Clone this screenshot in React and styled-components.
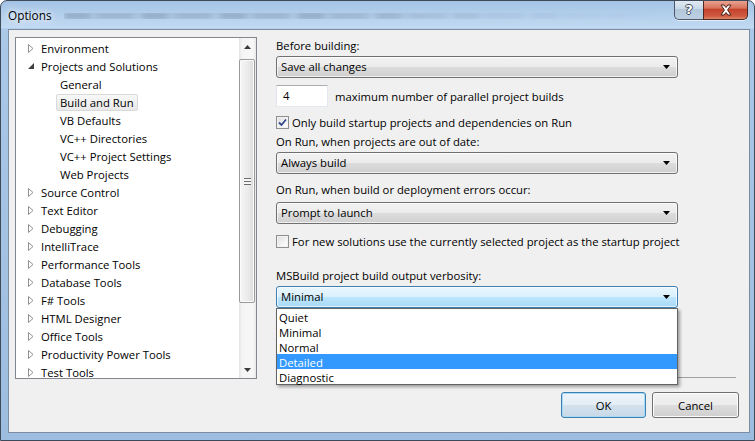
import React from 'react'
import styled, { createGlobalStyle } from 'styled-components'

const GlobalStyle = createGlobalStyle`
  html, body { margin: 0; padding: 0; background: #fff; }
  body {
    font-family: "Open Sans", "Segoe UI", sans-serif;
    font-size: 11.3px;
    color: #000;
  }
  * { box-sizing: border-box; }
`

const Window = styled.div`
  width: 755px;
  height: 441px;
  display: flex;
  flex-direction: column;
  border: 1px solid #3d4a5a;
  border-radius: 7px 7px 0 0;
  overflow: hidden;
  background: linear-gradient(180deg, #a4c3e5 0, #c2daf2 27px, #aac8e8 28px, #9dbde0 100%);
`

const TitleBar = styled.div`
  height: 28px;
  flex: none;
  display: flex;
  align-items: flex-start;
  padding: 0 6px 0 7px;
`

const Caption = styled.div`
  padding-top: 6px;
  line-height: 16px;
  font-size: 11.8px;
  text-shadow: 0 0 6px #fff, 0 0 10px #fff;
`

const GlassBlur = styled.div`
  flex: 1;
  height: 6px;
  margin: 12px 20px 0 12px;
  background: repeating-linear-gradient(90deg, rgba(80, 100, 125, 0.45) 0 26px, rgba(80, 100, 125, 0.15) 26px 33px, rgba(80, 100, 125, 0.35) 33px 70px, rgba(80, 100, 125, 0.1) 70px 78px);
  filter: blur(3px);
  mask-image: linear-gradient(90deg, #000 0, #000 45%, rgba(0, 0, 0, 0.3) 75%, transparent 100%);
`

const CaptionButtons = styled.div`
  display: flex;
  margin-top: -1px;
  box-shadow: 0 1px 0 rgba(255, 255, 255, 0.6);
  border-radius: 0 0 5px 5px;
`

const HelpButton = styled.div`
  width: 29px;
  height: 20px;
  border: 1px solid #4c586a;
  border-top: none;
  border-right: none;
  border-radius: 0 0 0 5px;
  background: linear-gradient(180deg, #e4ecf5 0, #cbd9e8 45%, #b3c7dc 50%, #bccfe2 100%);
  display: flex;
  align-items: center;
  justify-content: center;
  color: #fff;
  font-family: "DejaVu Sans", sans-serif;
  font-weight: bold;
  font-size: 13px;
  text-shadow: -1px 0 #3d4c60, 1px 0 #3d4c60, 0 -1px #3d4c60, 0 1px #3d4c60;
`

const CloseButton = styled.div`
  width: 45px;
  height: 20px;
  border: 1px solid #4c2a22;
  border-top: none;
  border-radius: 0 0 5px 0;
  background: linear-gradient(180deg, #e9a999 0, #d9745e 42%, #c5432c 50%, #cf5a40 85%, #e0886e 100%);
  display: flex;
  align-items: center;
  justify-content: center;
`

const Client = styled.div`
  flex: 1;
  margin: 0 4px 7px 7px;
  border: 1px solid #7d8da1;
  background: #f0f0f0;
  padding: 7px 10px 0 6px;
  display: flex;
  flex-direction: column;
`

const Body = styled.div`
  display: flex;
  height: 342px;
`

const Tree = styled.div`
  width: 242px;
  height: 342px;
  border: 1px solid #828790;
  background: #fff;
  display: flex;
`

const TreeList = styled.div`
  flex: 1;
  padding-top: 1px;
  overflow: hidden;
`

const Row = styled.div`
  height: 18px;
  display: flex;
  align-items: center;
  padding-left: ${p => p.$indent}px;
  white-space: nowrap;
`

const Twisty = styled.span`
  width: 13px;
  height: 18px;
  display: flex;
  align-items: center;
`

const ItemLabel = styled.span`
  line-height: 15px;
  padding: 0 3px;
  margin-left: -4px;
  border: 1px solid ${p => (p.$selected ? '#d9d9d9' : 'transparent')};
  border-radius: 2px;
  background: ${p => (p.$selected ? 'linear-gradient(180deg, #f8f8f8, #e8e8e8)' : 'transparent')};
`

const ScrollBar = styled.div`
  width: 17px;
  display: flex;
  flex-direction: column;
  background: linear-gradient(90deg, #e3e3e3 0, #f4f4f4 3px, #f7f7f7 14px, #e8e8e8 17px);
`

const ScrollArrow = styled.div`
  height: 17px;
  display: flex;
  align-items: center;
  justify-content: center;
`

const Track = styled.div`
  flex: 1;
  padding: 4px 1px 0 0;
`

const Thumb = styled.div`
  height: 244px;
  border: 1px solid #9a9a9a;
  border-radius: 2px;
  background: linear-gradient(90deg, #f6f6f6 0, #ececec 50%, #dcdcdc 100%);
  box-shadow: inset 0 0 0 1px #fbfbfb;
  display: flex;
  align-items: center;
  justify-content: center;
`

const Grip = styled.div`
  width: 7px;
  height: 7px;
  background: repeating-linear-gradient(180deg, #6e6e6e 0 1px, #f6f6f6 1px 3px);
`

const Pane = styled.div`
  width: 460px;
  margin-left: 19px;
  display: flex;
  flex-direction: column;
`

const FieldLabel = styled.div`
  line-height: 16px;
  margin-top: ${p => p.$top}px;
  white-space: nowrap;
`

const SelectBox = styled.div`
  position: relative;
  width: 402px;
  height: 22px;
  margin-top: ${p => p.$top}px;
  display: flex;
  align-items: center;
  padding: 0 7px 1px 4px;
  border: 1px solid ${p => (p.$focused ? '#3c7fb1' : '#707070')};
  border-radius: 3px;
  background: ${p =>
    p.$focused
      ? 'linear-gradient(180deg, #eaf6fd 0, #d9f0fc 50%, #bee6fd 50%, #a7d9f5 100%)'
      : 'linear-gradient(180deg, #f2f2f2 0, #ebebeb 50%, #dddddd 50%, #cfcfcf 100%)'};
  box-shadow: inset 0 0 0 1px rgba(255, 255, 255, 0.7);
`

const SelectValue = styled.span`
  flex: 1;
`

const Popup = styled.div`
  position: absolute;
  left: -1px;
  top: 21px;
  width: 402px;
  border: 1px solid #646464;
  background: #fff;
  box-shadow: 2px 2px 3px rgba(0, 0, 0, 0.35);
  z-index: 2;
`

const Option = styled.div`
  height: 15px;
  padding: 2px 0 0 2px;
  line-height: 13px;
  background: ${p => (p.$active ? '#3399ff' : 'transparent')};
  color: ${p => (p.$active ? '#fff' : '#000')};
`

const InlineRow = styled.div`
  display: flex;
  align-items: center;
  margin-top: ${p => p.$top}px;
  height: ${p => p.$height}px;
  white-space: nowrap;
`

const NumberBox = styled.div`
  width: 52px;
  height: 22px;
  background: #fff;
  border: 1px solid #e3e9ef;
  border-top-color: #abadb3;
  border-left-color: #e2e3ea;
  padding-left: 6px;
  line-height: 19px;
  margin-right: 7px;
`

const CheckBox = styled.div`
  width: 13px;
  height: 13px;
  border: 1px solid #8e8f8f;
  background: linear-gradient(135deg, #dcdcdc 0, #f4f4f4 60%, #ffffff 100%);
  box-shadow: inset 0 0 0 1px #f2f2f2;
  margin-right: 3px;
  display: flex;
  align-items: center;
  justify-content: center;
`

const Separator = styled.div`
  height: 1px;
  margin-top: auto;
  margin-bottom: 1px;
  background: #a0a0a0;
`

const Footer = styled.div`
  display: flex;
  justify-content: flex-end;
  gap: 6px;
  margin-top: 13px;
`

const Button = styled.div`
  width: ${p => p.$width}px;
  height: 26px;
  display: flex;
  align-items: center;
  justify-content: center;
  border-radius: 3px;
  border: 1px solid ${p => (p.$default ? '#3c7fb1' : '#707070')};
  background: ${p =>
    p.$default
      ? 'linear-gradient(180deg, #eef5fa 0, #e3edf5 50%, #d3e1ec 50%, #c8d9e7 100%)'
      : 'linear-gradient(180deg, #f2f2f2 0, #ebebeb 50%, #dddddd 50%, #cfcfcf 100%)'};
  box-shadow: inset 0 0 0 1px ${p => (p.$default ? '#a8dcf6' : '#fcfcfc')};
`

const Collapsed = () => (
  <svg width="6" height="9" viewBox="0 0 6 9">
    <path d="M0.5 0.5 L5 4.5 L0.5 8.5 Z" fill="#fff" stroke="#909090" />
  </svg>
)

const Expanded = () => (
  <svg width="6" height="6" viewBox="0 0 6 6">
    <path d="M6 0 L6 6 L0 6 Z" fill="#404040" />
  </svg>
)

const DropArrow = () => (
  <svg width="7" height="4" viewBox="0 0 7 4">
    <path d="M0 0 H7 L3.5 4 Z" fill="#000" />
  </svg>
)

const Tick = () => (
  <svg width="9" height="9" viewBox="0 0 9 9">
    <path d="M1 4.5 L3.5 7 L8 1.5" fill="none" stroke="#31478a" strokeWidth="1.8" />
  </svg>
)

const tree = [
  { label: 'Environment', kind: 'closed' },
  { label: 'Projects and Solutions', kind: 'open' },
  { label: 'General', kind: 'child' },
  { label: 'Build and Run', kind: 'child', selected: true },
  { label: 'VB Defaults', kind: 'child' },
  { label: 'VC++ Directories', kind: 'child' },
  { label: 'VC++ Project Settings', kind: 'child' },
  { label: 'Web Projects', kind: 'child' },
  { label: 'Source Control', kind: 'closed' },
  { label: 'Text Editor', kind: 'closed' },
  { label: 'Debugging', kind: 'closed' },
  { label: 'IntelliTrace', kind: 'closed' },
  { label: 'Performance Tools', kind: 'closed' },
  { label: 'Database Tools', kind: 'closed' },
  { label: 'F# Tools', kind: 'closed' },
  { label: 'HTML Designer', kind: 'closed' },
  { label: 'Office Tools', kind: 'closed' },
  { label: 'Productivity Power Tools', kind: 'closed' },
  { label: 'Test Tools', kind: 'closed' }
]

const verbosity = ['Quiet', 'Minimal', 'Normal', 'Detailed', 'Diagnostic']

const Select = ({ value, top, focused, children }) => (
  <SelectBox $top={top} $focused={focused}>
    <SelectValue>{value}</SelectValue>
    <DropArrow />
    {children}
  </SelectBox>
)

export default function App() {
  return (
    <>
      <GlobalStyle />
      <Window>
        <TitleBar>
          <Caption>Options</Caption>
          <GlassBlur />
          <CaptionButtons>
            <HelpButton>?</HelpButton>
            <CloseButton>
              <svg width="14" height="12" viewBox="0 0 14 12">
                <path
                  d="M2 1 H5 L7 3.5 L9 1 H12 L8.6 6 L12 11 H9 L7 8.5 L5 11 H2 L5.4 6 Z"
                  fill="#fff"
                  stroke="#4a2018"
                  strokeWidth="1"
                />
              </svg>
            </CloseButton>
          </CaptionButtons>
        </TitleBar>
        <Client>
          <Body>
            <Tree>
              <TreeList>
                {tree.map(item => (
                  <Row key={item.label} $indent={item.kind === 'child' ? 44 : 12}>
                    {item.kind !== 'child' && (
                      <Twisty>{item.kind === 'open' ? <Expanded /> : <Collapsed />}</Twisty>
                    )}
                    <ItemLabel $selected={item.selected}>{item.label}</ItemLabel>
                  </Row>
                ))}
              </TreeList>
              <ScrollBar>
                <ScrollArrow>
                  <svg width="7" height="4" viewBox="0 0 7 4">
                    <path d="M0 4 H7 L3.5 0 Z" fill="#3a3a3a" />
                  </svg>
                </ScrollArrow>
                <Track>
                  <Thumb>
                    <Grip />
                  </Thumb>
                </Track>
                <ScrollArrow>
                  <svg width="7" height="4" viewBox="0 0 7 4">
                    <path d="M0 0 H7 L3.5 4 Z" fill="#3a3a3a" />
                  </svg>
                </ScrollArrow>
              </ScrollBar>
            </Tree>
            <Pane>
              <FieldLabel $top={1}>Before building:</FieldLabel>
              <Select value="Save all changes" top={2} />
              <InlineRow $top={7} $height={22}>
                <NumberBox>4</NumberBox>
                maximum number of parallel project builds
              </InlineRow>
              <InlineRow $top={7} $height={16}>
                <CheckBox>
                  <Tick />
                </CheckBox>
                Only build startup projects and dependencies on Run
              </InlineRow>
              <FieldLabel $top={4}>On Run, when projects are out of date:</FieldLabel>
              <Select value="Always build" top={2} />
              <FieldLabel $top={8}>On Run, when build or deployment errors occur:</FieldLabel>
              <Select value="Prompt to launch" top={4} />
              <InlineRow $top={9} $height={16}>
                <CheckBox />
                For new solutions use the currently selected project as the startup project
              </InlineRow>
              <FieldLabel $top={19}>MSBuild project build output verbosity:</FieldLabel>
              <Select value="Minimal" top={2} focused>
                <Popup>
                  {verbosity.map(v => (
                    <Option key={v} $active={v === 'Detailed'}>
                      {v}
                    </Option>
                  ))}
                </Popup>
              </Select>
              <Separator />
            </Pane>
          </Body>
          <Footer>
            <Button $width={85} $default>
              OK
            </Button>
            <Button $width={87}>Cancel</Button>
          </Footer>
        </Client>
      </Window>
    </>
  )
}
